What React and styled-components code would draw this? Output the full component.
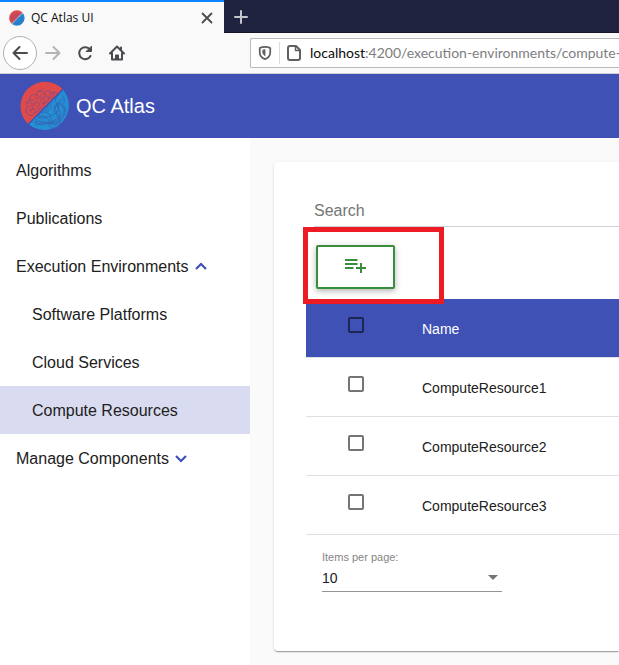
import React from "react";
import styled, { createGlobalStyle, css } from "styled-components";

const GlobalStyle = createGlobalStyle`
  *, *::before, *::after { box-sizing: border-box; }
  html { overflow: hidden; }
  body {
    margin: 0;
    background: #fafafa;
    color: #212121;
    font-family: "Liberation Sans", Arial, sans-serif;
  }
  button, input, select { font: inherit; color: inherit; }
`;

const Page = styled.div`
  display: flex;
  flex-direction: column;
  min-height: 100vh;
  overflow: hidden;
`;

/* Browser window */

const TabStrip = styled.div`
  display: flex;
  height: 33px;
  background: #202340;
  box-shadow: inset 0 -1px #13152b;
`;

const Tab = styled.div`
  display: flex;
  align-items: center;
  gap: 6px;
  width: 224px;
  padding: 0 9px;
  border-top: 2px solid #0a84ff;
  background: #f9f9fa;
  color: #0c0c0d;
  font: 12px/16px "Open Sans", "Noto Sans", sans-serif;
`;

const TabTitle = styled.span`
  flex: 1;
`;

const IconButton = styled.button`
  display: flex;
  align-items: center;
  justify-content: center;
  flex: none;
  width: ${(p) => p.$size}px;
  height: ${(p) => p.$size}px;
  padding: 0;
  border: ${(p) => (p.$ringed ? "1px solid #b1b1b3" : "0")};
  border-radius: 50%;
  background: ${(p) => (p.$ringed ? "#fff" : "none")};
  color: ${(p) => p.$color || "#4a4a4f"};
`;

const BrowserBar = styled.div`
  display: flex;
  align-items: center;
  height: 41px;
  padding-left: 3px;
  border-bottom: 1px solid #d0d0d4;
  background: #f9f9fa;
`;

const Controls = styled.div`
  display: flex;
  align-items: center;
  width: 247px;
  flex: none;
`;

const AddressBar = styled.div`
  display: flex;
  align-items: center;
  flex: 1;
  min-width: 0;
  height: 30px;
  padding-left: 7px;
  border: 1px solid #b9b9bc;
  border-right: 0;
  border-radius: 2px 0 0 2px;
  background: #fff;
  color: #606064;
  font: 14px/20px Lato, "Open Sans", sans-serif;
`;

const AddressDivider = styled.span`
  width: 1px;
  height: 22px;
  margin: 0 6px 0 7px;
  background: #dcdcde;
`;

const AddressLabel = styled.label`
  margin-left: 8px;
  color: #0c0c0d;
`;

const AddressInput = styled.input`
  flex: 1;
  min-width: 0;
  padding: 0;
  border: 0;
  outline: 0;
  background: none;
  color: #7d7d80;
`;

/* Application */

const AppHeader = styled.header`
  display: flex;
  align-items: center;
  gap: 6px;
  height: 64px;
  padding-left: 20px;
  background: #3f51b5;
  color: #fff;
`;

const AppTitle = styled.h1`
  margin: 0;
  font-size: 20px;
  font-weight: 400;
  line-height: 32px;
`;

const Body = styled.div`
  display: flex;
  flex: 1;
`;

const Sidebar = styled.nav`
  flex: none;
  width: 250px;
  padding-top: 8px;
  background: #fff;
`;

const navItem = css`
  display: flex;
  align-items: center;
  gap: 6px;
  width: 100%;
  height: 48px;
  padding: 2px 16px 0;
  font-size: 16px;
  text-align: left;
  text-decoration: none;
  color: #212121;
`;

const NavLink = styled.a`
  ${navItem}
  padding-left: ${(p) => (p.$nested ? 32 : 16)}px;
  background: ${(p) => (p.$active ? "#d9dbf0" : "none")};
`;

const NavToggle = styled.button`
  ${navItem}
  border: 0;
  background: none;
`;

const Main = styled.main`
  flex: 1;
  min-width: 0;
  padding: 24px 0 14px 24px;
`;

const Card = styled.section`
  height: 100%;
  padding: 32px 0 32px 32px;
  border-radius: 4px 0 0 4px;
  background: #fff;
  box-shadow: 0 2px 1px -1px rgba(0, 0, 0, 0.2), 0 1px 1px rgba(0, 0, 0, 0.14),
    0 1px 3px rgba(0, 0, 0, 0.12);
`;

const SearchInput = styled.input`
  display: block;
  width: calc(100% - 8px);
  height: 33px;
  margin-left: 8px;
  padding: 2px 0 0;
  border: 0;
  border-bottom: 1px solid #cfd1d8;
  border-radius: 0;
  outline: 0;
  background: none;
  font-size: 16px;
  &::placeholder {
    color: #757575;
    opacity: 1;
  }
`;

const Actions = styled.div`
  padding: 18px 10px 10px;
`;

const Highlight = styled.div`
  position: relative;
  width: max-content;
  &::after {
    content: "";
    position: absolute;
    inset: -18px -49px -15px -13px;
    border: 5px solid #ed1c24;
    pointer-events: none;
  }
`;

const AddButton = styled.button`
  display: flex;
  align-items: center;
  justify-content: center;
  width: 79px;
  height: 44px;
  padding: 0 0 4px;
  border: 2px solid #388e3c;
  border-radius: 2px;
  background: #fff;
  color: #388e3c;
  box-shadow: 0 2px 6px rgba(0, 0, 0, 0.3);
`;

const Table = styled.table`
  width: 100%;
  border-collapse: separate;
  border-spacing: 0;
  font-size: 14px;
`;

const HeadRow = styled.tr`
  background: #3f51b5;
  color: #fff;
`;

const cell = css`
  height: 59px;
  padding: 2px 0 0;
  border-bottom: 1px solid #dee0e4;
  font-weight: 400;
  text-align: left;
`;

const HeadCell = styled.th`
  ${cell}
`;

const Cell = styled.td`
  ${cell}
`;

const CheckHead = styled.th`
  ${cell}
  width: 116px;
  padding: 0 0 6px 42px;
`;

const CheckCell = styled.td`
  ${cell}
  width: 116px;
  padding: 0 0 6px 42px;
`;

const Checkbox = styled.input`
  display: block;
  appearance: none;
  width: 16px;
  height: 16px;
  margin: 0;
  border: 2px solid ${(p) => (p.$dark ? "#1d2553" : "#757575")};
  border-radius: 2px;
  &:checked {
    background: #3f51b5;
  }
`;

const Paginator = styled.div`
  display: flex;
  flex-direction: column;
  width: 180px;
  margin: 15px 0 0 16px;
`;

const PageSizeLabel = styled.label`
  color: #858585;
  font-size: 11px;
  line-height: 14px;
`;

const SelectBox = styled.div`
  display: grid;
  align-items: center;
  height: 28px;
  border-bottom: 1px solid #949494;
`;

const PageSizeSelect = styled.select`
  grid-area: 1 / 1;
  appearance: none;
  height: 27px;
  padding: 0;
  border: 0;
  outline: 0;
  background: none;
  font-size: 14px;
`;

const SelectArrow = styled.span`
  grid-area: 1 / 1;
  justify-self: end;
  width: 0;
  height: 0;
  margin-right: 4px;
  border: 5px solid transparent;
  border-top-color: #757575;
  border-bottom: 0;
  pointer-events: none;
`;

function Logo({ size }) {
  return (
    <svg width={size} height={size} viewBox="0 0 50 50" aria-hidden="true">
      <path d="M7.800 42.700A24.500 24.500 0 0 1 42.300 7.800Z" fill="#e14a4a" />
      <path d="M43.300 9A24.500 24.500 0 0 1 9 43.600Z" fill="#2490d3" />
      <g fill="none" stroke="#7c4a8c" strokeWidth="1" strokeLinecap="round" strokeLinejoin="round" opacity="0.8">
        <path d="M9 34c-4-2-4-6-1-8-3-3-1-7 2-7-1-4 3-7 6-5 1-4 6-5 8-2 3-4 8-2 8 0 3-2 6 0 5 3M9 34c3 2 6-1 5-3 3 1 6-1 5-4 3 1 6-2 4-5 4 1 6-2 5-5 4 1 6-1 5-4" />
        <path d="M8 26c2-2 5-1 5 1s-2 3-3 1M10 19c3-1 5 1 4 3s-4 1-3-1M16 14c3 0 4 3 2 4s-4-1-2-2M24 12c2 2 1 5-1 5s-3-3-1-4M29 11c2 1 2 4 0 5s-4-1-3-3M14 25c0-3 3-5 5-3s0 4-2 3M20 20c1-3 5-3 5 0s-3 3-4 1M11 31c-2-1-1-3 1-3s3 2 5 0M31 13c0-2 3-2 4 0M18 9c1 2 4 1 5-1M6 22c2 1 4-1 3-3" />
      </g>
      <g fill="none" stroke="#3468b9" strokeWidth="1" strokeLinecap="round" strokeLinejoin="round">
        <path d="M14 42c7-5 13 2 20-1s13-10 9-15-10-1-7 4 7 10 2 15-9 1-9-4-7-9-12-3 6 7 14 3 12-7 8-12-1-9 4-11" />
        <path d="M16 44c7-5 13 1 20-2 7-3 12-11 8-17s-13-1-9 6c3 5 6 9 2 12s-6-1-6-6-8-9-12-3c-2 4 6 4 11 1 8-3 11-7 7-12-3-4-1-7 2-9" />
        <path d="M23 28c4 5 10 0 7-6M25 27c2 2 4-1 3-3M42 14c2 2 3 5 2 8" />
      </g>
    </svg>
  );
}

function Glyph({ size = 16, width = 2, children }) {
  return (
    <svg
      width={size}
      height={size}
      viewBox="0 0 16 16"
      fill="none"
      stroke="currentColor"
      strokeWidth={width}
      strokeLinecap="round"
      strokeLinejoin="round"
      aria-hidden="true"
    >
      {children}
    </svg>
  );
}

function Chevron({ up }) {
  return (
    <svg width="12" height="16" viewBox="0 0 12 16" fill="none" stroke="#3f51b5" strokeWidth="2.200" aria-hidden="true">
      <path d={up ? "M1 10l5-5 5 5" : "M1 5l5 5 5-5"} />
    </svg>
  );
}

const resources = ["ComputeResource1", "ComputeResource2", "ComputeResource3"];

export default function App() {
  return (
    <Page>
      <GlobalStyle />
      <TabStrip>
        <Tab>
          <Logo size={16} />
          <TabTitle>QC Atlas UI</TabTitle>
          <IconButton $size={16} aria-label="Close tab">
            <Glyph width={1.8}><path d="M3.500 3.500l9 9M12.500 3.500l-9 9" /></Glyph>
          </IconButton>
        </Tab>
        <IconButton $size={33} $color="#c5c5ce" aria-label="New tab">
          <Glyph><path d="M8 2v12M2 8h12" /></Glyph>
        </IconButton>
      </TabStrip>
      <BrowserBar>
        <Controls>
          <IconButton $size={34} $ringed aria-label="Back">
            <Glyph><path d="M15 8H1.500M7.500 2l-6 6 6 6" /></Glyph>
          </IconButton>
          <IconButton $size={32} $color="#b4b4b7" aria-label="Forward">
            <Glyph><path d="M1 8h13.500M8.500 2l6 6-6 6" /></Glyph>
          </IconButton>
          <IconButton $size={32} aria-label="Reload">
            <Glyph>
              <path d="M13 4.500A6 6 0 1 0 13.500 11" />
              <path d="M14.500 1.500v5h-5z" fill="currentColor" strokeWidth="1" />
            </Glyph>
          </IconButton>
          <IconButton $size={32} aria-label="Home">
            <Glyph>
              <path d="M1 8.500l7-7 7 7M3 8v6.500h10V8M12 2.500V5" />
              <path d="M7 14v-3.500h2V14" />
            </Glyph>
          </IconButton>
        </Controls>
        <AddressBar>
          <Glyph size={14}>
            <path d="M8 1C5.500 1 3.500 1.500 2 2.200V7c0 4 2.500 6.500 6 8 3.500-1.500 6-4 6-8V2.200C12.500 1.500 10.500 1 8 1z" />
            <path d="M8 4.500v6.500C6.500 10 5.500 9 5.500 7V5z" fill="currentColor" strokeWidth="1" />
          </Glyph>
          <AddressDivider />
          <Glyph>
            <path d="M4 1h6l4 4v8a2 2 0 0 1-2 2H4a2 2 0 0 1-2-2V3a2 2 0 0 1 2-2z" />
            <path d="M9.500 1.500v4h4" strokeWidth="1.500" />
          </Glyph>
          <AddressLabel htmlFor="address">localhost</AddressLabel>
          <AddressInput id="address" defaultValue=":4200/execution-environments/compute-resources" />
        </AddressBar>
      </BrowserBar>

      <AppHeader>
        <Logo size={50} />
        <AppTitle>QC Atlas</AppTitle>
      </AppHeader>
      <Body>
        <Sidebar>
          <NavLink href="#algorithms">Algorithms</NavLink>
          <NavLink href="#publications">Publications</NavLink>
          <NavToggle aria-expanded="true">Execution Environments <Chevron up /></NavToggle>
          <NavLink href="#software-platforms" $nested>Software Platforms</NavLink>
          <NavLink href="#cloud-services" $nested>Cloud Services</NavLink>
          <NavLink href="#compute-resources" $nested $active aria-current="page">Compute Resources</NavLink>
          <NavToggle aria-expanded="false">Manage Components <Chevron /></NavToggle>
        </Sidebar>
        <Main>
          <Card>
            <SearchInput type="text" placeholder="Search" aria-label="Search" />
            <Actions>
              <Highlight>
                <AddButton aria-label="Add compute resource">
                  <svg width="23" height="24" viewBox="0 0 23 24" fill="currentColor" aria-hidden="true">
                    <path d="M1 6h12.500v2H1zM1 10h12.500v2H1zM1 14h8.500v2H1zM12 14h4v-4h2v4h4v2h-4v4h-2v-4h-4z" />
                  </svg>
                </AddButton>
              </Highlight>
            </Actions>
            <Table>
              <thead>
                <HeadRow>
                  <CheckHead>
                    <Checkbox type="checkbox" $dark aria-label="Select all" />
                  </CheckHead>
                  <HeadCell>Name</HeadCell>
                </HeadRow>
              </thead>
              <tbody>
                {resources.map((name) => (
                  <tr key={name}>
                    <CheckCell>
                      <Checkbox type="checkbox" aria-label={`Select ${name}`} />
                    </CheckCell>
                    <Cell>{name}</Cell>
                  </tr>
                ))}
              </tbody>
            </Table>
            <Paginator>
              <PageSizeLabel htmlFor="page-size">Items per page:</PageSizeLabel>
              <SelectBox>
                <PageSizeSelect id="page-size" defaultValue="10">
                  <option>5</option>
                  <option>10</option>
                  <option>25</option>
                </PageSizeSelect>
                <SelectArrow />
              </SelectBox>
            </Paginator>
          </Card>
        </Main>
      </Body>
    </Page>
  );
}
